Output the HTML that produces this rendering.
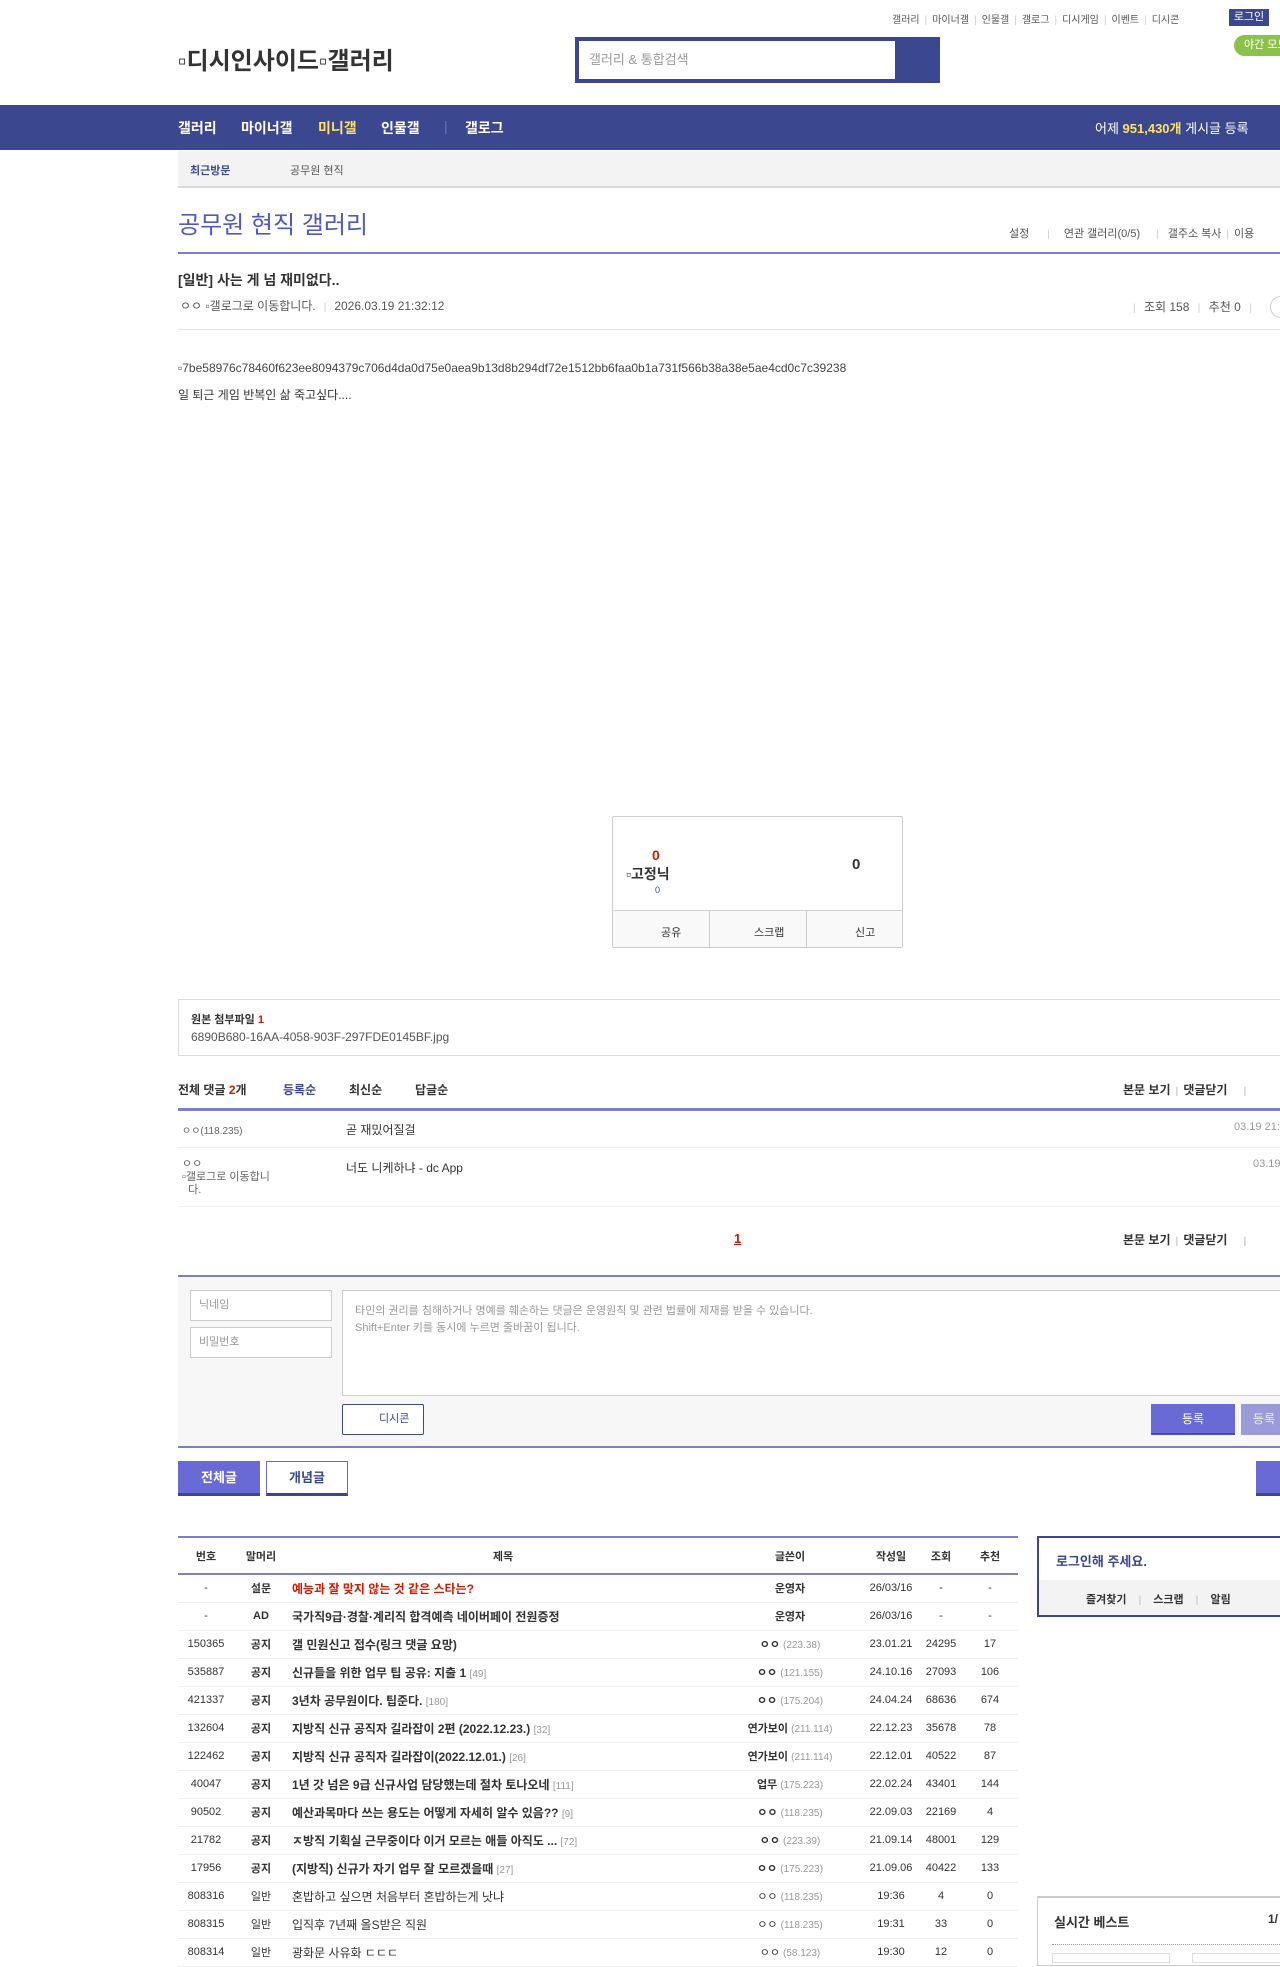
<!DOCTYPE html>
<html><head><meta charset="utf-8">
<style>
*{margin:0;padding:0;box-sizing:border-box}
body{width:1280px;height:1960px;overflow:hidden;background:#fff;font-family:"Liberation Sans","Noto Sans CJK KR",sans-serif;color:#333;font-size:12px;position:relative}
.a{position:absolute;white-space:nowrap}
.nav{left:0;top:105px;width:1280px;height:45px;background:#3b4890}
.nav span{position:absolute;top:13px;color:#fff;font-weight:bold;font-size:14px}
.sep{color:#ccc;margin:0 5px;font-size:10px}
.ln{position:absolute;left:178px;width:1102px}
table{border-collapse:collapse;font-size:11px;table-layout:fixed}
td{height:28px;border-bottom:1px solid #eee;text-align:center;color:#333;overflow:hidden;white-space:nowrap}
td.t{text-align:left;padding-left:4px;font-size:12px}
.ip{color:#999;font-size:10px}
.rc{color:#999;font-size:10px}
b{font-weight:bold}
</style></head><body>
<div class="a" style="left:892px;top:11px;font-size:10px;color:#555">갤러리<span class="sep">|</span>마이너갤<span class="sep">|</span>인물갤<span class="sep">|</span>갤로그<span class="sep">|</span>디시게임<span class="sep">|</span>이벤트<span class="sep">|</span>디시콘</div>
<div class="a" style="left:1229px;top:9px;width:40px;height:17px;background:#3b4890;color:#fff;font-size:11px;text-align:center;line-height:17px">로그인</div>
<div class="a" style="left:1234px;top:35px;width:60px;height:21px;background:#8bc34a;color:#fff;border-radius:11px;font-size:11px;line-height:21px;padding-left:10px">야간 모드</div>
<div class="a" style="left:178px;top:41px;font-size:24px;font-weight:bold;color:#333">▫디시인사이드▫갤러리</div>
<div class="a" style="left:575px;top:37px;width:365px;height:46px;background:#3b4890"></div>
<div class="a" style="left:579px;top:41px;width:316px;height:38px;background:#fff;color:#999;font-size:13px;line-height:38px;padding-left:10px">갤러리 &amp; 통합검색</div>
<div class="a nav">
<span style="left:178px">갤러리</span><span style="left:241px">마이너갤</span><span style="left:318px;color:#ffe066">미니갤</span><span style="left:381px">인물갤</span><span style="left:444px;color:#6a75b0;font-weight:normal">|</span><span style="left:465px">갤로그</span>
<span style="left:1095px;font-weight:normal;font-size:13px">어제 <b style="color:#ffe066">951,430개</b> 게시글 등록</span>
</div>
<div class="a" style="left:178px;top:151px;width:1102px;height:37px;background:#f3f3f3;border-bottom:2px solid #d8d8d8"></div>
<div class="a" style="left:190px;top:162px;font-size:11px;color:#3b4890;font-weight:bold">최근방문</div>
<div class="a" style="left:290px;top:162px;font-size:11px;color:#555">공무원 현직</div>
<div class="a" style="left:178px;top:205px;font-size:24px;color:#4e58c7">공무원 현직 갤러리</div>
<div class="a" style="left:1009px;top:225px;font-size:11px;color:#555">설정<span class="sep" style="margin:0 14px 0 18px">|</span>연관 갤러리(0/5)<span class="sep" style="margin:0 9px 0 16px">|</span>갤주소 복사<span class="sep">|</span>이용</div>
<div class="ln" style="top:252px;height:2px;background:#7b7ec9"></div>
<div class="a" style="left:178px;top:270px;font-size:14px;font-weight:bold">[일반] 사는 게 넘 재미없다..</div>
<div class="a" style="left:180px;top:297px;font-size:12px;color:#555">ㅇㅇ ▫갤로그로 이동합니다.<span class="sep" style="margin:0 8px">|</span>2026.03.19 21:32:12</div>
<div class="a" style="left:1128px;top:298px;font-size:12px;color:#555"><span class="sep">|</span> 조회 158 <span class="sep">|</span> 추천 0 <span class="sep">|</span></div>
<div class="a" style="left:1270px;top:296px;width:30px;height:22px;border:1px solid #ccc;border-radius:11px"></div>
<div class="ln" style="top:329px;height:1px;background:#e5e5e5"></div>
<div class="a" style="left:178px;top:361px;font-size:12px;color:#444">▫7be58976c78460f623ee8094379c706d4da0d75e0aea9b13d8b294df72e1512bb6faa0b1a731f566b38a38e5ae4cd0c7c39238</div>
<div class="a" style="left:178px;top:386px;font-size:12px;color:#333">일 퇴근 게임 반복인 삶 죽고싶다....</div>
<div class="a" style="left:612px;top:816px;width:291px;height:132px;border:1px solid #ccc;border-radius:2px"></div>
<div class="a" style="left:652px;top:847px;color:#d31900;font-weight:bold;font-size:14px">0</div>
<div class="a" style="left:626px;top:864px;font-weight:bold;font-size:14px">▫고정닉</div>
<div class="a" style="left:655px;top:885px;font-size:9px;color:#3b4890">0</div>
<div class="a" style="left:852px;top:856px;font-weight:bold;font-size:15px;color:#333">0</div>
<div class="a" style="left:613px;top:910px;width:289px;height:37px;background:#f9f9f9;border-top:1px solid #ccc"></div>
<div class="a" style="left:709px;top:911px;width:1px;height:36px;background:#ccc"></div>
<div class="a" style="left:806px;top:911px;width:1px;height:36px;background:#ccc"></div>
<div class="a" style="left:661px;top:924px;font-size:11px">공유</div>
<div class="a" style="left:754px;top:924px;font-size:11px">스크랩</div>
<div class="a" style="left:855px;top:924px;font-size:11px">신고</div>
<div class="a" style="left:178px;top:999px;width:1110px;height:57px;border:1px solid #ddd"></div>
<div class="a" style="left:191px;top:1011px;font-size:11px;font-weight:bold">원본 첨부파일 <span style="color:#d31900">1</span></div>
<div class="a" style="left:191px;top:1030px;font-size:12px;color:#555">6890B680-16AA-4058-903F-297FDE0145BF.jpg</div>
<div class="a" style="left:178px;top:1081px;font-size:12px;font-weight:bold">전체 댓글 <span style="color:#d31900">2</span>개</div>
<div class="a" style="left:283px;top:1081px;font-size:12px;font-weight:bold;color:#3b4890">등록순</div>
<div class="a" style="left:349px;top:1081px;font-size:12px;font-weight:bold">최신순</div>
<div class="a" style="left:415px;top:1081px;font-size:12px;font-weight:bold">답글순</div>
<div class="a" style="left:1123px;top:1081px;font-size:12px;font-weight:bold">본문 보기<span class="sep">|</span>댓글닫기<span class="sep" style="margin-left:16px">|</span></div>
<div class="ln" style="top:1108px;height:3px;background:#7b7ec9"></div>
<div class="a" style="left:182px;top:1122px;font-size:10px;color:#666">ㅇㅇ(118.235)</div>
<div class="a" style="left:346px;top:1121px;font-size:12px">곧 재밌어질걸</div>
<div class="a" style="left:1234px;top:1121px;font-size:11px;color:#999">03.19 21:</div>
<div class="ln" style="top:1147px;height:1px;background:#eee"></div>
<div class="a" style="left:182px;top:1158px;font-size:11px;color:#666;line-height:13px">ㅇㅇ<br>▫갤로그로 이동합니<br>&nbsp;&nbsp;다.</div>
<div class="a" style="left:346px;top:1159px;font-size:12px">너도 니케하냐 - dc App</div>
<div class="a" style="left:1253px;top:1158px;font-size:11px;color:#999">03.19</div>
<div class="ln" style="top:1206px;height:1px;background:#eee"></div>
<div class="a" style="left:734px;top:1231px;font-size:13px;font-weight:bold;color:#d31900;text-decoration:underline">1</div>
<div class="a" style="left:1123px;top:1231px;font-size:12px;font-weight:bold">본문 보기<span class="sep">|</span>댓글닫기<span class="sep" style="margin-left:16px">|</span></div>
<div class="ln" style="top:1275px;height:2px;background:#7b7ec9"></div>
<div class="ln" style="top:1277px;height:169px;background:#f7f7f7"></div>
<div class="ln" style="top:1446px;height:2px;background:#7b7ec9"></div>
<div class="a" style="left:190px;top:1290px;width:142px;height:31px;background:#fff;border:1px solid #ccc;color:#999;font-size:11px;line-height:29px;padding-left:8px">닉네임</div>
<div class="a" style="left:190px;top:1327px;width:142px;height:31px;background:#fff;border:1px solid #ccc;color:#999;font-size:11px;line-height:29px;padding-left:8px">비밀번호</div>
<div class="a" style="left:342px;top:1290px;width:950px;height:106px;background:#fff;border:1px solid #ccc;color:#999;font-size:11px;line-height:17px;padding:12px 12px">타인의 권리를 침해하거나 명예를 훼손하는 댓글은 운영원칙 및 관련 법률에 제재를 받을 수 있습니다.<br>Shift+Enter 키를 동시에 누르면 줄바꿈이 됩니다.</div>
<div class="a" style="left:342px;top:1404px;width:82px;height:31px;background:#fff;border:1px solid #3b4890;border-radius:2px;color:#3b4890;font-size:11px;line-height:29px;padding-left:36px">디시콘</div>
<div class="a" style="left:1151px;top:1404px;width:84px;height:31px;background:#6a6ad6;color:#fff;font-size:12px;line-height:31px;text-align:center;border-bottom:2px solid #4b4bb0">등록</div>
<div class="a" style="left:1241px;top:1404px;width:60px;height:31px;background:#9a9bd8;color:#eee;font-size:12px;line-height:31px;padding-left:12px">등록</div>
<div class="a" style="left:178px;top:1461px;width:82px;height:35px;background:#6a6ad6;color:#fff;font-weight:bold;font-size:13px;line-height:33px;text-align:center;border-bottom:3px solid #3b4890">전체글</div>
<div class="a" style="left:266px;top:1461px;width:82px;height:35px;background:#fff;color:#3b4890;font-weight:bold;font-size:13px;line-height:31px;text-align:center;border:1px solid #6a6ad6;border-bottom:3px solid #3b4890">개념글</div>
<div class="a" style="left:1256px;top:1461px;width:40px;height:35px;background:#6a6ad6;border-bottom:3px solid #3b4890"></div>
<div class="a" style="left:178px;top:1536px;width:840px;height:2px;background:#7b7ec9"></div>
<table class="a" style="left:178px;top:1538px;width:840px">
<colgroup><col style="width:56px"><col style="width:54px"><col style="width:430px"><col style="width:144px"><col style="width:58px"><col style="width:42px"><col style="width:56px"></colgroup>
<tr style="font-weight:bold"><td style="height:36px;border-bottom:2px solid #7b7ec9">번호</td><td style="border-bottom:2px solid #7b7ec9">말머리</td><td style="border-bottom:2px solid #7b7ec9">제목</td><td style="border-bottom:2px solid #7b7ec9">글쓴이</td><td style="border-bottom:2px solid #7b7ec9">작성일</td><td style="border-bottom:2px solid #7b7ec9">조회</td><td style="border-bottom:2px solid #7b7ec9">추천</td></tr>
<tr><td>-</td><td><b>설문</b></td><td class="t"><b style="color:#d31900">예능과 잘 맞지 않는 것 같은 스타는?</b></td><td><b>운영자</b></td><td>26/03/16</td><td>-</td><td>-</td></tr>
<tr><td>-</td><td><b>AD</b></td><td class="t"><b>국가직9급·경찰·계리직 합격예측 네이버페이 전원증정</b></td><td><b>운영자</b></td><td>26/03/16</td><td>-</td><td>-</td></tr>
<tr><td>150365</td><td><b>공지</b></td><td class="t"><b>갤 민원신고 접수(링크 댓글 요망)</b></td><td><b>ㅇㅇ</b> <span class="ip">(223.38)</span></td><td>23.01.21</td><td>24295</td><td>17</td></tr>
<tr><td>535887</td><td><b>공지</b></td><td class="t"><b>신규들을 위한 업무 팁 공유: 지출 1</b> <span class="rc">[49]</span></td><td><b>ㅇㅇ</b> <span class="ip">(121.155)</span></td><td>24.10.16</td><td>27093</td><td>106</td></tr>
<tr><td>421337</td><td><b>공지</b></td><td class="t"><b>3년차 공무원이다. 팁준다.</b> <span class="rc">[180]</span></td><td><b>ㅇㅇ</b> <span class="ip">(175.204)</span></td><td>24.04.24</td><td>68636</td><td>674</td></tr>
<tr><td>132604</td><td><b>공지</b></td><td class="t"><b>지방직 신규 공직자 길라잡이 2편 (2022.12.23.)</b> <span class="rc">[32]</span></td><td><b>연가보이</b> <span class="ip">(211.114)</span></td><td>22.12.23</td><td>35678</td><td>78</td></tr>
<tr><td>122462</td><td><b>공지</b></td><td class="t"><b>지방직 신규 공직자 길라잡이(2022.12.01.)</b> <span class="rc">[26]</span></td><td><b>연가보이</b> <span class="ip">(211.114)</span></td><td>22.12.01</td><td>40522</td><td>87</td></tr>
<tr><td>40047</td><td><b>공지</b></td><td class="t"><b>1년 갓 넘은 9급 신규사업 담당했는데 절차 토나오네</b> <span class="rc">[111]</span></td><td><b>업무</b> <span class="ip">(175.223)</span></td><td>22.02.24</td><td>43401</td><td>144</td></tr>
<tr><td>90502</td><td><b>공지</b></td><td class="t"><b>예산과목마다 쓰는 용도는 어떻게 자세히 알수 있음??</b> <span class="rc">[9]</span></td><td><b>ㅇㅇ</b> <span class="ip">(118.235)</span></td><td>22.09.03</td><td>22169</td><td>4</td></tr>
<tr><td>21782</td><td><b>공지</b></td><td class="t"><b>ㅈ방직 기획실 근무중이다 이거 모르는 애들 아직도 ...</b> <span class="rc">[72]</span></td><td><b>ㅇㅇ</b> <span class="ip">(223.39)</span></td><td>21.09.14</td><td>48001</td><td>129</td></tr>
<tr><td>17956</td><td><b>공지</b></td><td class="t"><b>(지방직) 신규가 자기 업무 잘 모르겠을때</b> <span class="rc">[27]</span></td><td><b>ㅇㅇ</b> <span class="ip">(175.223)</span></td><td>21.09.06</td><td>40422</td><td>133</td></tr>
<tr><td>808316</td><td>일반</td><td class="t">혼밥하고 싶으면 처음부터 혼밥하는게 낫냐</td><td>ㅇㅇ <span class="ip">(118.235)</span></td><td>19:36</td><td>4</td><td>0</td></tr>
<tr><td>808315</td><td>일반</td><td class="t">입직후 7년째 올S받은 직원</td><td>ㅇㅇ <span class="ip">(118.235)</span></td><td>19:31</td><td>33</td><td>0</td></tr>
<tr><td>808314</td><td>일반</td><td class="t">광화문 사유화 ㄷㄷㄷ</td><td>ㅇㅇ <span class="ip">(58.123)</span></td><td>19:30</td><td>12</td><td>0</td></tr>
</table>
<div class="a" style="left:1037px;top:1536px;width:260px;height:81px;border:2px solid #3b4890;border-right:none"></div>
<div class="a" style="left:1039px;top:1580px;width:241px;height:35px;background:#f3f3f3"></div>
<div class="a" style="left:1056px;top:1551px;font-size:13px;font-weight:bold;color:#3b4890">로그인해 주세요.</div>
<div class="a" style="left:1086px;top:1591px;font-size:11px;font-weight:bold">즐겨찾기<span class="sep" style="margin:0 12px">|</span>스크랩<span class="sep" style="margin:0 12px">|</span>알림</div>
<div class="a" style="left:1037px;top:1896px;width:260px;height:70px;border:1px solid #ccc;border-top:2px solid #ccc"></div>
<div class="a" style="left:1054px;top:1912px;font-size:13px;font-weight:bold">실시간 베스트</div>
<div class="a" style="left:1268px;top:1912px;font-size:12px;font-weight:bold">1/</div>
<div class="a" style="left:1052px;top:1944px;width:228px;border-top:1px dotted #999"></div>
<div class="a" style="left:1052px;top:1953px;width:118px;height:10px;border:1px solid #ddd"></div>
<div class="a" style="left:1192px;top:1953px;width:100px;height:10px;border:1px solid #ddd"></div>
</body></html>
